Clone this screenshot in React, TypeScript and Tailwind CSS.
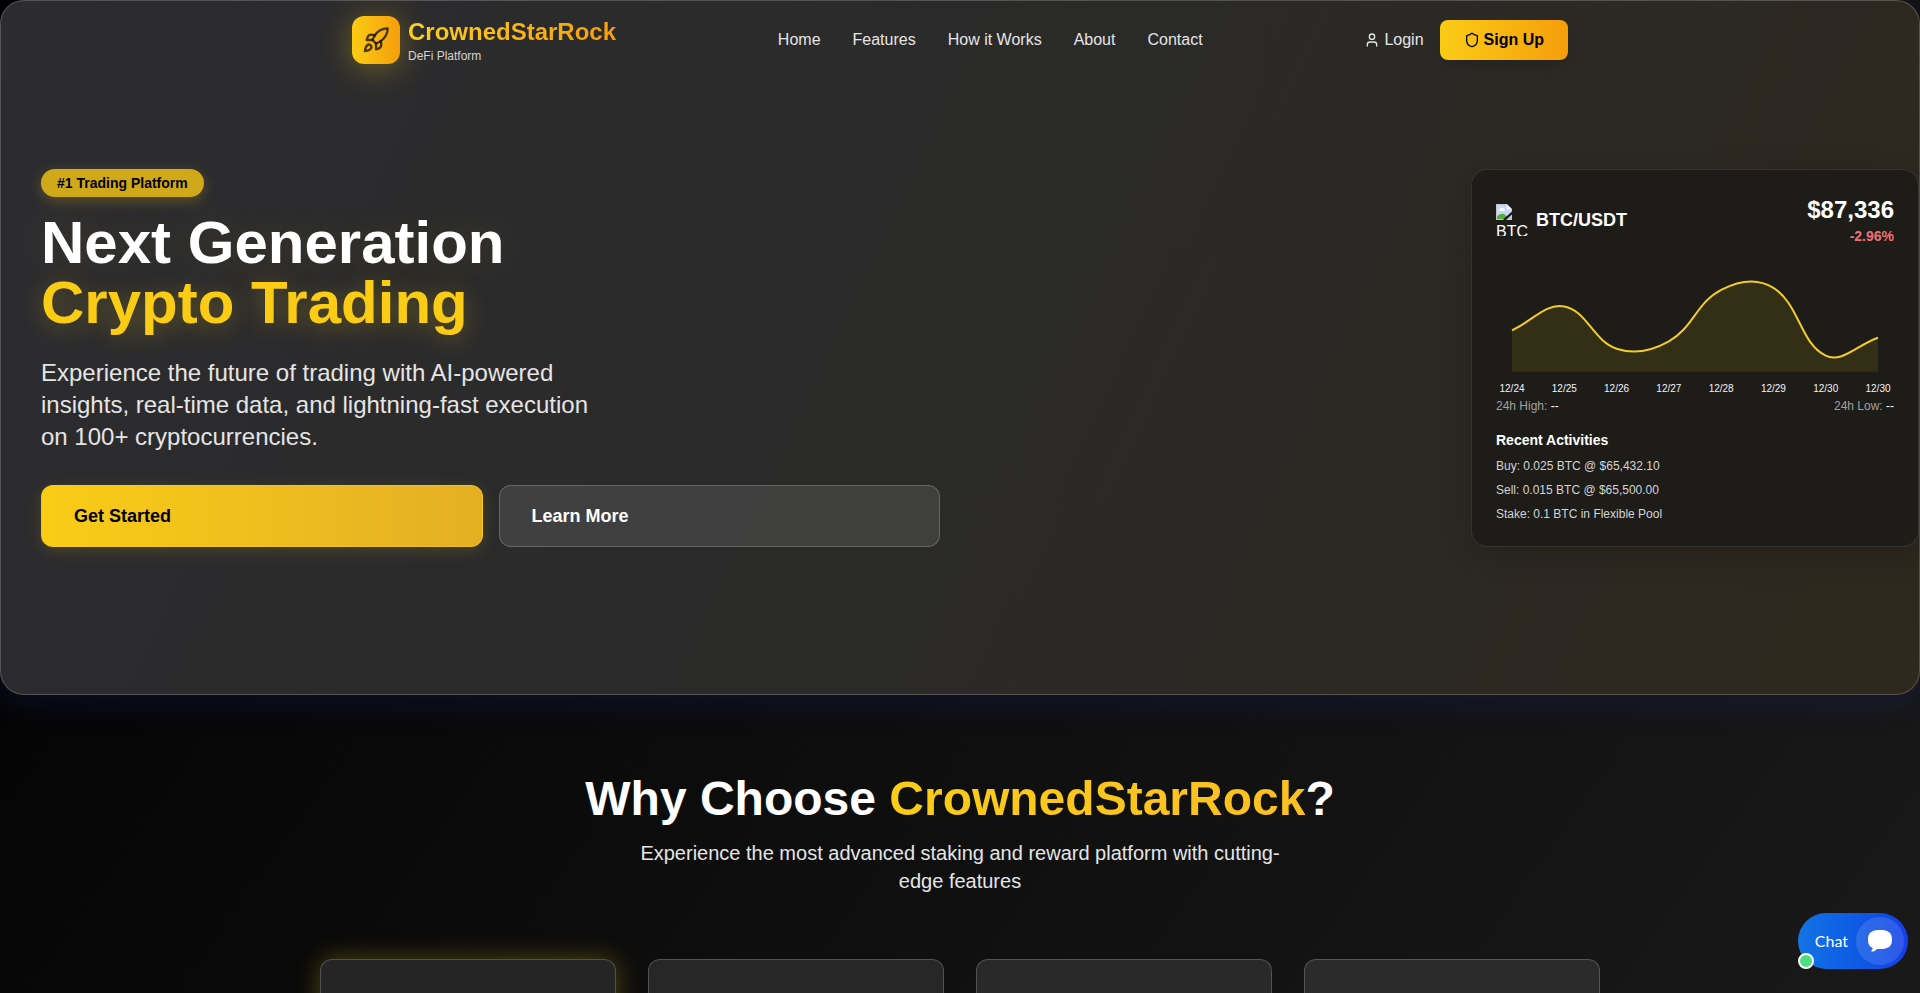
import React from "react";
import { Rocket, Shield, User } from "lucide-react";

type Point = { x: number; y: number };

const navLinks = ["Home", "Features", "How it Works", "About", "Contact"];

const activities = [
  "Buy: 0.025 BTC @ $65,432.10",
  "Sell: 0.015 BTC @ $65,500.00",
  "Stake: 0.1 BTC in Flexible Pool",
];

const chartLabels = ["12/24", "12/25", "12/26", "12/27", "12/28", "12/29", "12/30", "12/30"];
const chartHeights = [60.3, 36.5, 78.7, 71.3, 19.8, 17.8, 85.7, 67.7];
const chartPoints: Point[] = chartHeights.map((y, i) => ({ x: 16 + i * (366 / 7), y }));
const chartBase = 101.7;

/* Smooth line through the points, with control points weighted by segment length. */
function splinePath(points: Point[], tension: number): string {
  const controls = points.map((cur, i) => {
    const prev = points[i - 1] ?? cur;
    const next = points[i + 1] ?? cur;
    const before = Math.hypot(cur.x - prev.x, cur.y - prev.y);
    const after = Math.hypot(next.x - cur.x, next.y - cur.y);
    const a = (tension * before) / (before + after);
    const b = (tension * after) / (before + after);
    return {
      inX: cur.x - a * (next.x - prev.x),
      inY: cur.y - a * (next.y - prev.y),
      outX: cur.x + b * (next.x - prev.x),
      outY: cur.y + b * (next.y - prev.y),
    };
  });
  let d = `M${points[0].x} ${points[0].y}`;
  for (let i = 1; i < points.length; i++) {
    const from = controls[i - 1];
    const to = controls[i];
    d += ` C${from.outX} ${from.outY} ${to.inX} ${to.inY} ${points[i].x} ${points[i].y}`;
  }
  return d;
}

function Header() {
  return (
    <header className="mx-auto flex w-full max-w-[1280px] items-center justify-between px-8 py-[15px]">
      <a href="#home" className="flex items-center gap-2">
        <span className="flex size-12 items-center justify-center rounded-xl bg-linear-to-r from-[#facc15] to-[#f59e0b] shadow-[0_4px_32px_rgba(250,204,21,0.35)]">
          <Rocket className="size-7 text-black/70" />
        </span>
        <span className="flex flex-col">
          <span className="bg-linear-to-r from-[#fbcf24] to-[#f59e0b] bg-clip-text text-2xl font-bold text-transparent">
            CrownedStarRock
          </span>
          <span className="text-xs text-neutral-300">DeFi Platform</span>
        </span>
      </a>
      <nav className="flex items-center gap-8">
        {navLinks.map((label) => (
          <a key={label} href="#" className="text-neutral-200">
            {label}
          </a>
        ))}
      </nav>
      <div className="flex items-center gap-4">
        <a href="#login" className="flex items-center gap-1 text-neutral-200">
          <User className="size-4" />
          Login
        </a>
        <a
          href="#signup"
          className="flex h-10 items-center gap-1 rounded-lg bg-linear-to-r from-[#facc15] to-[#f59e0b] px-6 font-semibold text-black shadow-lg"
        >
          <Shield className="size-4" />
          Sign Up
        </a>
      </div>
    </header>
  );
}

function MissingImage() {
  return (
    <span className="block size-8 overflow-hidden text-white">
      <svg viewBox="0 0 16 16" className="block size-4" aria-hidden="true">
        <path d="M0 0h11l5 5v11H0z" fill="#c3c6ca" />
        <path d="M1 1h9.500L15 5.500V15H1z" fill="#c5d8f8" />
        <path d="M3 6.500a1.500 1.500 0 0 1 1.500-1.700 2 2 0 0 1 3.500 0A1.300 1.300 0 0 1 8.500 7H3.500z" fill="#fff" />
        <path d="M1 15v-2.500C3.500 10 6 9.500 8 10l3 2.500V15z" fill="#5bab3a" />
        <path d="M10.500 0v5.500H16z" fill="#f4f6f8" />
        <path d="M16 7.500 7.500 15v1H10l6-5.500z" fill="#1d1c19" />
        <path d="M11 15.500 16 11v5h-5z" fill="#c3c6ca" />
      </svg>
      <span className="block leading-6">BTC</span>
    </span>
  );
}

function PriceChart() {
  const line = splinePath(chartPoints, 0.4);
  const last = chartPoints[chartPoints.length - 1];
  return (
    <svg viewBox="0 0 398 128" className="mt-6 block w-full" role="img" aria-label="BTC price over the last week">
      <path d={`${line} L${last.x} ${chartBase} L${chartPoints[0].x} ${chartBase} Z`} fill="#e6cf00" fillOpacity="0.11" />
      <path d={line} fill="none" stroke="#f2cb2c" strokeWidth="2" />
      {chartPoints.map((p, i) => (
        <text key={i} x={p.x} y="122" textAnchor="middle" fontSize="10" fill="#f3f4f6">
          {chartLabels[i]}
        </text>
      ))}
    </svg>
  );
}

function MarketCard() {
  return (
    <section className="w-full max-w-md rounded-2xl border border-white/10 bg-[#1d1c19] p-6 shadow-[0_8px_32px_rgba(0,0,0,0.2)]">
      <div className="flex items-center justify-between">
        <div className="flex items-center gap-2">
          <MissingImage />
          <h2 className="text-lg font-semibold text-white">BTC/USDT</h2>
        </div>
        <div className="text-right">
          <div className="text-2xl font-bold text-white">$87,336</div>
          <div className="text-sm font-semibold text-[#f07171]">-2.96%</div>
        </div>
      </div>
      <PriceChart />
      <div className="flex justify-between text-xs text-neutral-400">
        <span>
          24h High: <span className="text-white">--</span>
        </span>
        <span>
          24h Low: <span className="text-white">--</span>
        </span>
      </div>
      <h3 className="mt-4 mb-2 text-sm font-semibold text-white">Recent Activities</h3>
      <ul className="flex flex-col gap-2 text-xs text-neutral-300">
        {activities.map((item) => (
          <li key={item}>{item}</li>
        ))}
      </ul>
    </section>
  );
}

function Hero() {
  return (
    <div className="grid grid-cols-2 pt-[90px] pb-[147px] pl-10">
      <div className="pr-10">
        <span className="block w-fit rounded-2xl bg-[#d0a91b] px-4 py-1 text-sm font-semibold text-black shadow-[0_4px_14px_rgba(250,204,21,0.25)]">
          #1 Trading Platform
        </span>
        <h1 className="mt-4 text-[60px] leading-[60px] font-bold text-white [text-shadow:0_0_40px_rgba(250,204,21,0.12)]">
          Next Generation
          <span className="block text-[#facc15] [text-shadow:0_4px_24px_rgba(250,204,21,0.3)]">Crypto Trading</span>
        </h1>
        <p className="mt-6 max-w-xl text-2xl text-neutral-200">
          Experience the future of trading with AI-powered insights, real-time data, and lightning-fast execution on
          100+ cryptocurrencies.
        </p>
        <div className="mt-8 grid grid-cols-2 gap-4">
          <button
            type="button"
            className="rounded-xl border border-[#facc15]/50 bg-linear-to-r from-[#facc15] to-[#e5af24] px-8 py-4 text-left text-lg font-semibold text-black shadow-[0_4px_16px_rgba(250,204,21,0.15)]"
          >
            Get Started
          </button>
          <button
            type="button"
            className="rounded-xl border border-white/20 bg-white/10 px-8 py-4 text-left text-lg font-semibold text-white"
          >
            Learn More
          </button>
        </div>
      </div>
      <div className="flex justify-end">
        <MarketCard />
      </div>
    </div>
  );
}

function WhyChoose() {
  return (
    <section className="mx-auto max-w-[1280px] pt-20">
      <h2 className="text-center text-5xl leading-[48px] font-bold text-white">
        Why Choose{" "}
        <span className="bg-linear-to-r from-[#facc15] to-[#fbbf24] bg-clip-text text-transparent">
          CrownedStarRock
        </span>
        ?
      </h2>
      <p className="mx-auto mt-4 max-w-2xl text-center text-xl text-neutral-200">
        Experience the most advanced staking and reward platform with cutting-edge features
      </p>
      <div className="mt-16 grid grid-cols-4 gap-8">
        <div className="h-64 rounded-xl border border-white/20 bg-[#252525] shadow-[0_0_24px_rgba(250,204,21,0.3)]" />
        <div className="h-64 rounded-xl border border-white/20 bg-[#272727]" />
        <div className="h-64 rounded-xl border border-white/20 bg-[#292929]" />
        <div className="h-64 rounded-xl border border-white/20 bg-[#2b2b2b]" />
      </div>
    </section>
  );
}

function ChatButton() {
  return (
    <button
      type="button"
      className="fixed right-3 bottom-6 flex h-14 items-center gap-2 rounded-full bg-linear-to-r from-[#1473e4] to-[#153fe6] pr-1 pl-[17px] font-[Lato,sans-serif] text-white"
    >
      Chat
      <span className="flex size-12 items-center justify-center rounded-full bg-white/12">
        <svg viewBox="0 0 24 24" className="size-6" aria-hidden="true">
          <path
            d="M12 1c8.500 0 12 2.500 12 9.500S20.500 20 12 20c-1 0-2 0-2.900-.1-1.400 1.500-3 2.500-5.200 2.700-.7 0-.8-.6-.4-1 .8-.8 1.200-1.600 1.200-2.700C1.300 17.500 0 15 0 10.500 0 3.500 3.500 1 12 1z"
            fill="#fff"
          />
        </svg>
      </span>
      <span className="absolute bottom-0 left-0 size-4 rounded-full border-2 border-white bg-[#4ade80]" />
    </button>
  );
}

export default function App() {
  return (
    <div className="h-screen overflow-hidden bg-linear-[125deg] from-black via-[#0d0d0d] to-[#191919] font-['Liberation_Sans',Arial,sans-serif]">
      <div className="rounded-3xl border border-white/20 bg-linear-[115deg] from-[#2c2c30] via-[#2a2a29] to-[#2e281d] bg-origin-border shadow-[0_8px_32px_rgba(31,38,135,0.24)]">
        <Header />
        <Hero />
      </div>
      <WhyChoose />
      <ChatButton />
    </div>
  );
}
